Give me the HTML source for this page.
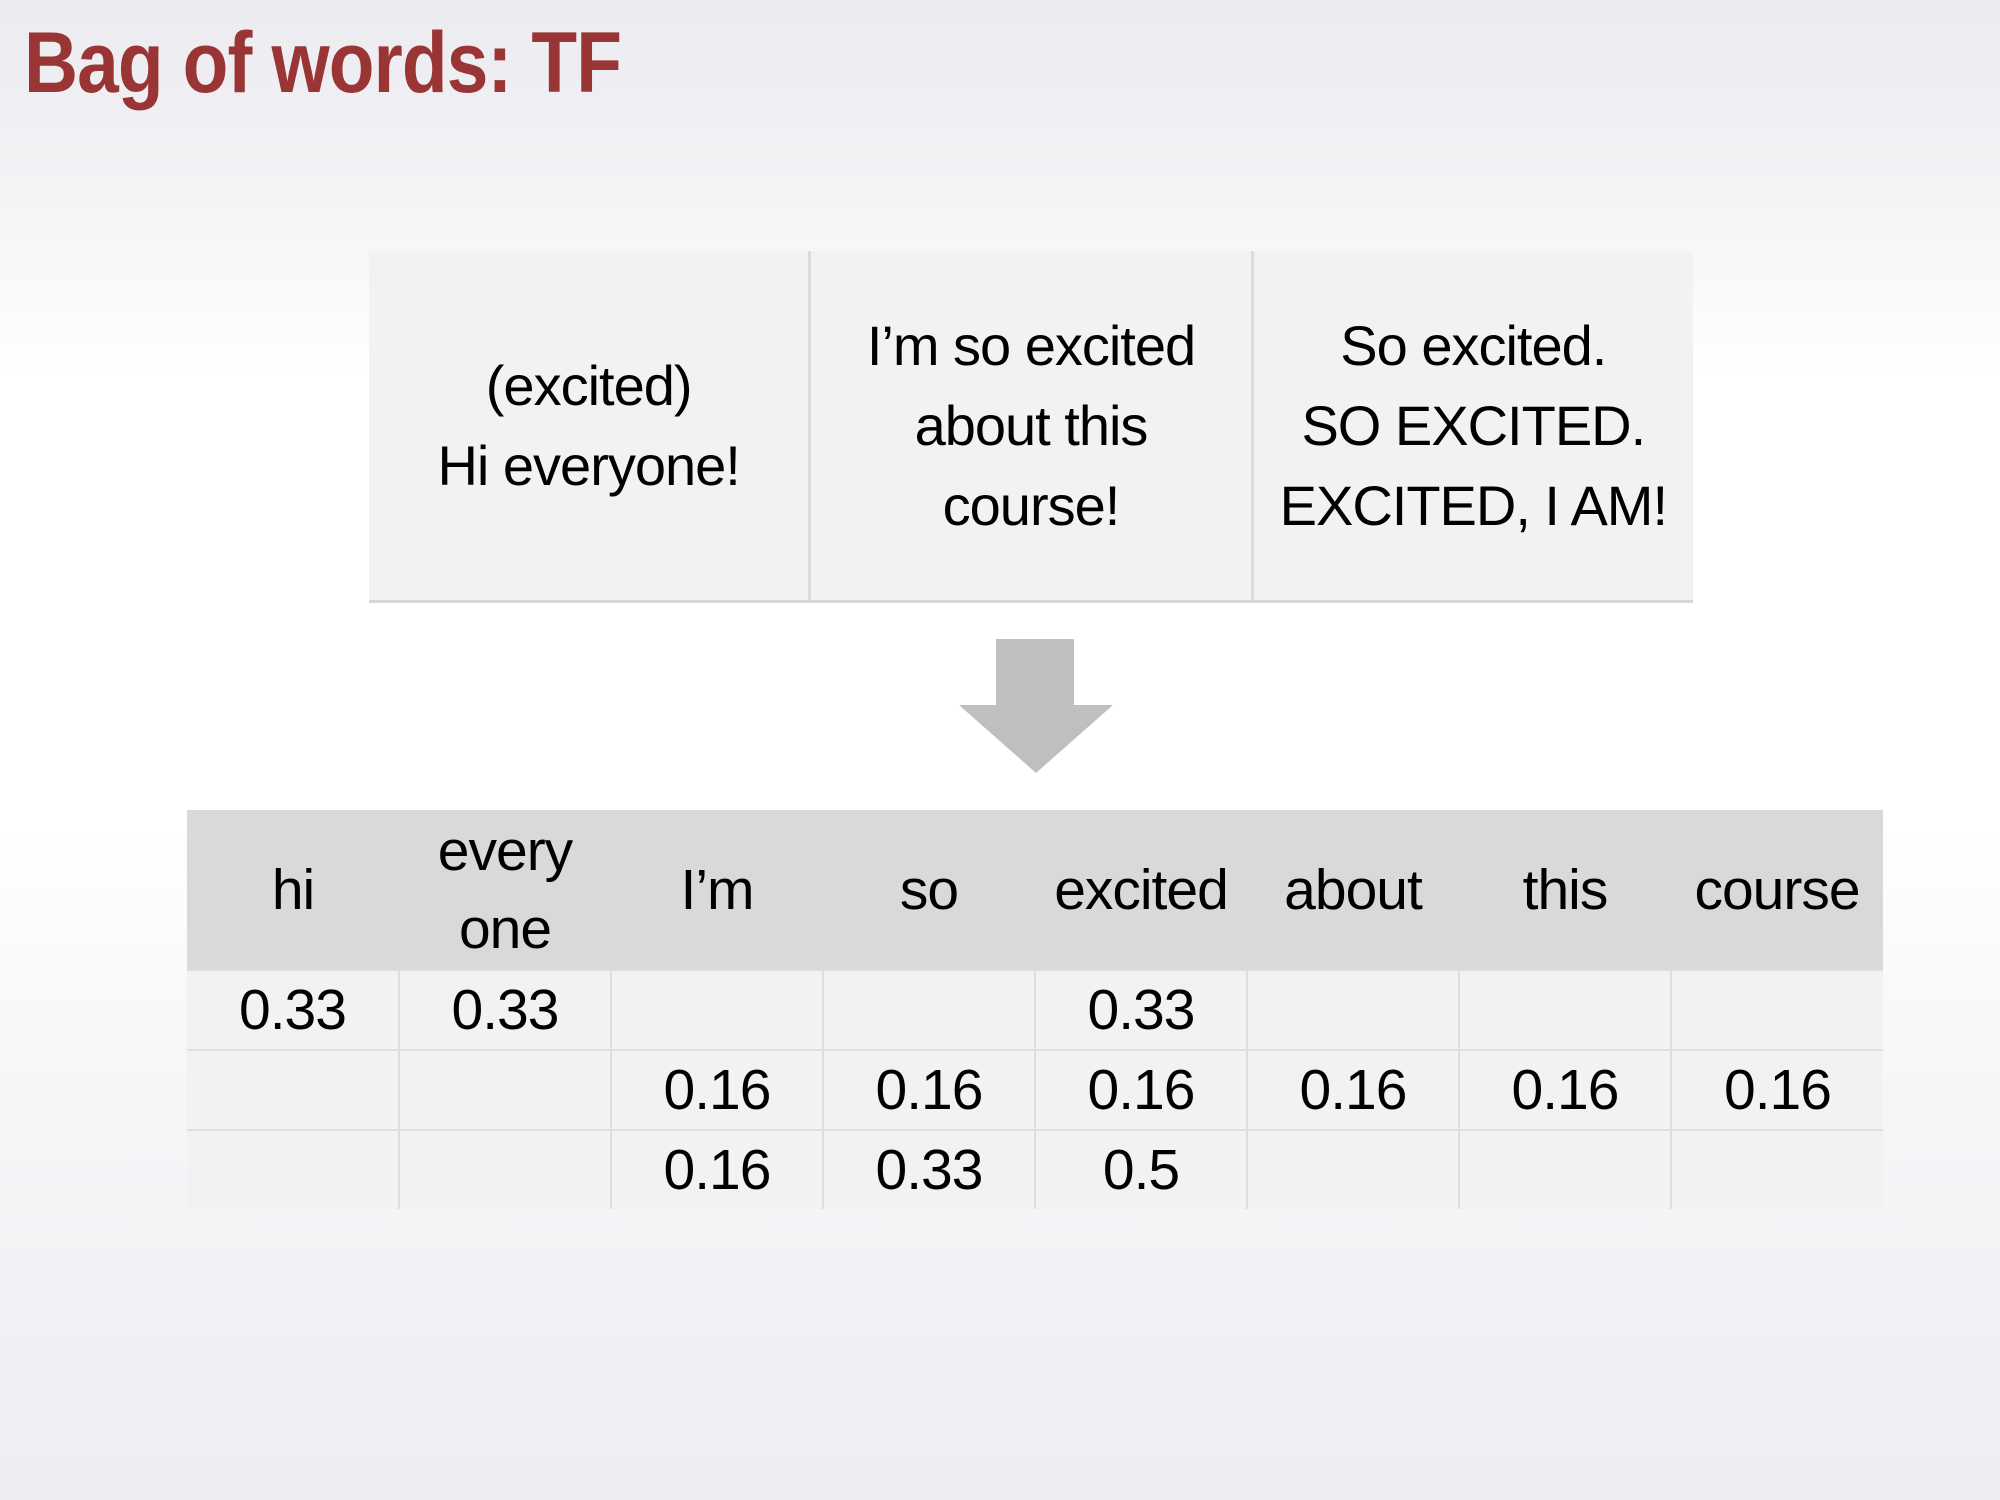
<!DOCTYPE html>
<html><head><meta charset="utf-8"><style>
html,body{margin:0;padding:0}
body{width:2000px;height:1500px;position:relative;overflow:hidden;font-family:"Liberation Sans",sans-serif;
background:linear-gradient(to bottom,#ebebf0 0%,#f3f3f6 12%,#ffffff 25%,#ffffff 55%,#f8f8fa 68%,#ededf2 100%);}
.title{position:absolute;left:24px;top:14px;font-size:86px;font-weight:bold;color:#9a3535;white-space:nowrap;transform-origin:0 0;transform:scaleX(0.87);letter-spacing:-1px}
.top{position:absolute;left:369px;top:251px;width:1324px;height:349px;border-bottom:3px solid #d6d6d6;display:flex}
.top div{flex:1;background:#f2f2f2;display:flex;align-items:center;justify-content:center;text-align:center;font-size:56px;line-height:80px;color:#000;border-right:3px solid #dcdcdc;letter-spacing:-1px}
.top div:last-child{border-right:none}
.arrow{position:absolute;left:959px;top:639px}
table{position:absolute;left:187px;top:810px;width:1696px;border-collapse:collapse;table-layout:fixed}
td{text-align:center;font-size:57px;color:#000;padding:0;letter-spacing:-1px}
tr.h td{background:#d9d9d9;height:159px;line-height:78px}
tr.r td{background:#f2f2f2;height:78px;border-top:2px solid #dedede;border-left:2px solid #dedede}
tr.r td:first-child{border-left:none}
</style></head><body>
<div class="title">Bag of words: TF</div>
<div class="top">
<div>(excited)<br>Hi everyone!</div>
<div>I’m so excited<br>about this<br>course!</div>
<div>So excited.<br>SO EXCITED.<br>EXCITED, I AM!</div>
</div>
<svg class="arrow" width="154" height="134" viewBox="0 0 154 134"><polygon points="37,0 115,0 115,66 154,66 77,134 0,66 37,66" fill="#bfbfbf"/></svg>
<table>
<tr class="h"><td>hi</td><td>every<br>one</td><td>I’m</td><td>so</td><td>excited</td><td>about</td><td>this</td><td>course</td></tr>
<tr class="r"><td>0.33</td><td>0.33</td><td></td><td></td><td>0.33</td><td></td><td></td><td></td></tr>
<tr class="r"><td></td><td></td><td>0.16</td><td>0.16</td><td>0.16</td><td>0.16</td><td>0.16</td><td>0.16</td></tr>
<tr class="r"><td></td><td></td><td>0.16</td><td>0.33</td><td>0.5</td><td></td><td></td><td></td></tr>
</table>
</body></html>
